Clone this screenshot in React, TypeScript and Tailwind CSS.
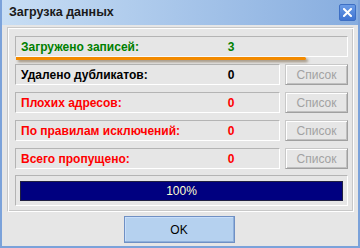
import React from "react";

const font = { fontFamily: '"Liberation Sans", Arial, sans-serif' };

function Row({ label, value, color, button = true }: { label: string; value: string; color: string; button?: boolean }) {
  return (
    <div className="flex h-[21px] gap-[5px]">
      <div className="flex h-[21px] w-[265px] items-center border border-t-[#b4b4b4] border-l-[#b4b4b4] border-b-white border-r-white">
        <span className={`w-[205px] pl-[5px] text-[12px] font-bold ${color}`}>{label}</span>
        <span className={`w-[20px] text-center text-[12px] font-bold ${color}`}>{value}</span>
      </div>
      {button && (
        <div className="flex h-[21px] w-[63px] items-center justify-center border border-t-[#c8c8c8] border-l-[#c8c8c8] border-b-[#a0a0a0] border-r-[#a0a0a0] bg-[#e6e6e6] shadow-[inset_1px_1px_0_#fff,inset_-1px_-1px_0_#c0c0c0] text-[12px] text-[#a2a2a2]">
          Список
        </div>
      )}
    </div>
  );
}

export default function App() {
  return (
    <div className="w-[360px] h-[248px] bg-[#e6e6e6]" style={font}>
      <div className="flex h-[248px] flex-col border-x-2 border-b-2 border-[#7ba2da]">
        <div className="flex h-[25px] items-center justify-between bg-gradient-to-r from-[#c8def4] to-[#87addf] pl-[7px] pr-[2px]">
          <span className="text-[12.5px] font-bold text-[#1a1a1a]">Загрузка данных</span>
          <div className="flex h-[17px] w-[17px] items-center justify-center rounded-[2px] border border-[#3d6fc4] bg-gradient-to-b from-[#6b9ce6] to-[#3f74d2]">
            <svg width="9" height="9" viewBox="0 0 9 9">
              <path d="M1 1 L8 8 M8 1 L1 8" stroke="#fff" strokeWidth="2" strokeLinecap="square" />
            </svg>
          </div>
        </div>
        <div className="flex flex-1 flex-col bg-[#e6e6e6] px-[5px] pt-[2px] pr-[4px]">
          <div className="flex h-[185px] flex-col border border-t-[#c8c8c8] border-l-[#c8c8c8] border-b-white border-r-white shadow-[inset_1px_1px_0_#fff,inset_-1px_-1px_0_#c8c8c8] pl-[7px] pt-[8px]">
            <div className="relative h-[21px] w-[333px] border border-t-[#b4b4b4] border-l-[#b4b4b4] border-b-white border-r-white flex items-center">
              <span className="w-[205px] pl-[5px] text-[12px] font-bold text-[#008000]">Загружено записей:</span>
              <span className="w-[20px] text-center text-[12px] font-bold text-[#008000]">3</span>
              <div className="absolute left-0 top-[20px] h-[3px] w-[290px] rounded-r-full bg-[#f28a00] shadow-[2px_2px_3px_rgba(90,60,20,0.55)]"></div>
            </div>
            <div className="mt-[7px] flex flex-col gap-[7px]">
              <Row label="Удалено дубликатов:" value="0" color="text-black" />
              <Row label="Плохих адресов:" value="0" color="text-[#ff0000]" />
              <Row label="По правилам исключений:" value="0" color="text-[#ff0000]" />
              <Row label="Всего пропущено:" value="0" color="text-[#ff0000]" />
            </div>
            <div className="mt-[6px] flex h-[31px] w-[333px] items-center justify-center border border-t-[#b4b4b4] border-l-[#b4b4b4] border-b-white border-r-white">
              <div className="flex h-[20px] w-[323px] items-center justify-center border border-[#202040] bg-[#000080] text-[12px] text-[#ffffd0]">
                100%
              </div>
            </div>
          </div>
          <div className="mt-[4px] flex justify-center">
            <div className="ml-[-3px] flex h-[27px] w-[111px] items-center justify-center border border-[#6f90c4] bg-[#b5d1ef] shadow-[inset_-1px_-1px_0_#8fb0dc,inset_1px_1px_0_#c8defa] text-[12px] text-black">
              OK
            </div>
          </div>
        </div>
      </div>
    </div>
  );
}
